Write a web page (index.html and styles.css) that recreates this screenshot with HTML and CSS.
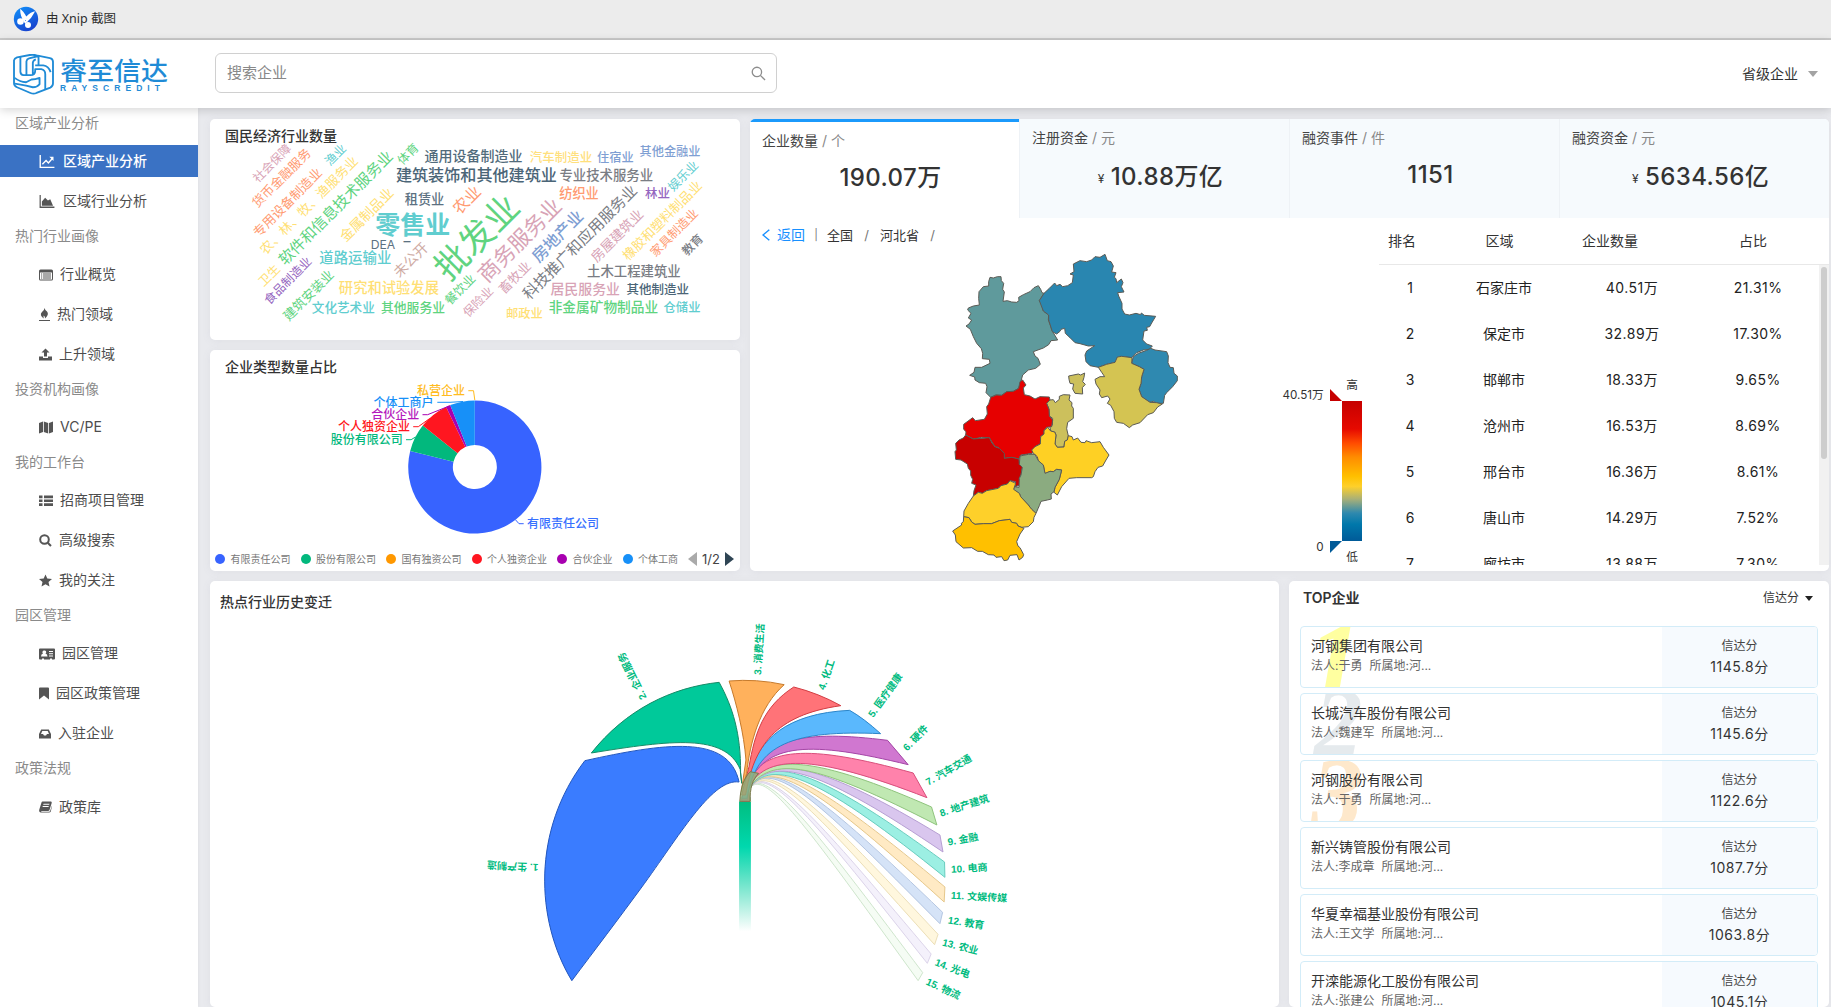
FILE: index.html
```html
<!DOCTYPE html>
<html lang="zh-CN">
<head>
<meta charset="utf-8">
<title>区域产业分析</title>
<link rel="stylesheet" href="styles.css">
</head>
<body>
<div class="titlebar">
  <svg class="xnip" viewBox="0 0 26 26"><defs><linearGradient id="xg" x1="0" y1="0" x2="0.6" y2="1"><stop offset="0" stop-color="#1093fb"/><stop offset="1" stop-color="#1844cf"/></linearGradient></defs><circle cx="13" cy="13" r="12.2" fill="url(#xg)"/><path d="M8 4.500Q12 8 14 15L12 16Q8 10 8 4.500ZM20.500 6.500Q16 8 11 14.500L12.500 16.500Q18 12 20.500 6.500Z" fill="#fff" stroke="#fff" stroke-width="1.600"/><circle cx="7.500" cy="15.500" r="3.300" fill="#fff"/><circle cx="15" cy="19" r="3" fill="#fff"/></svg>
  <span>由 Xnip 截图</span>
</div>
<header class="header">
  <div class="brand">
    <svg class="brand-mark" viewBox="38 158 122 122"><g fill="none" stroke="#1f8bd6" stroke-width="5.500" stroke-linejoin="round"><path d="M41 177Q42 171 50 168L88 161Q98 159 108 162L148 170Q157 172 157 181V245Q157 254 149 258L108 274Q99 278 90 274L50 257Q41 253 41 245Z"/><path d="M60 167V211Q61 220 69 221H78M78 221V180Q79 173 86 171L114 164V190M97 221V184Q98 176 106 174M78 221H90Q104 221 104 208V203H122Q134 205 134 218V264M104 192H128Q144 194 150 212M43 229Q58 241 77 242L93 234Q104 234 117 229V248Q110 257 97 257L77 252L44 246"/></g></svg>
    <div class="brand-text"><b>睿至信达</b><i>RAYSCREDIT</i></div>
  </div>
  <div class="search"><span>搜索企业</span><svg viewBox="0 0 16 16"><g fill="none" stroke="#8d8d8d" stroke-width="1.400"><circle cx="6.300" cy="6.300" r="5"/><path d="M10 10L15 15"/></g></svg></div>
  <div class="user"><span>省级企业</span><i class="caret"></i></div>
</header>
<div class="main">
  <nav class="side">
    <h4>区域产业分析</h4>
    <a class="on"><svg width="16" viewBox="0 0 16 14"><path d="M.7 0V13.300H16M3 10L7 6L9.500 8.500L14 3.500" fill="none" stroke="currentColor" stroke-width="1.500"/><path d="M10.500 2H15V6.500Z"/></svg>区域产业分析</a>
    <a><svg width="16" viewBox="0 0 16 14"><path d="M0 0H1.300V12.500H16V14H0ZM2.500 11.500V7L6 3L9 6L11.500 4.500L14.500 11.500Z"/></svg>区域行业分析</a>
    <h4>热门行业画像</h4>
    <a><svg width="14" viewBox="0 0 14 12"><path d="M1.500 1H12.500Q14 1 14 2.500V10.500Q14 12 12.500 12H1.500Q0 12 0 10.500V2.500Q0 1 1.500 1ZM1 4V11H13V4ZM2 5H3.200V6H2ZM4 5H12V6H4ZM2 7H3.200V8H2ZM4 7H12V8H4ZM2 9H3.200V10H2ZM4 9H12V10H4Z" fill-rule="evenodd"/></svg>行业概览</a>
    <a><svg width="11" viewBox="0 0 11 13"><path d="M0 12H11V13H0ZM5.500 0Q6 2 8 3.500Q10.500 6.500 6 10.500Q6.500 8.500 4.500 7.500L4.700 10.500Q0 7 3 4Q5.500 2 5.500 0Z"/></svg>热门领域</a>
    <a><svg width="13" viewBox="0 0 13 12"><path d="M6.500 0L10.500 4H8V8H5V4H2.500ZM0 8H4V9.500H9V8H13V12H0Z"/></svg>上升领域</a>
    <h4>投资机构画像</h4>
    <a><svg width="14" viewBox="0 0 14 12"><path d="M0 1.500L4 0V10.500L0 12ZM4.800 0L9.200 1.500V12L4.800 10.500ZM10 1.500L14 0V10.500L10 12Z"/></svg>VC/PE</a>
    <h4>我的工作台</h4>
    <a><svg width="14" viewBox="0 0 14 12"><path d="M0 1H3.500V3.800H0ZM5 1H14V3.800H5ZM0 5H3.500V7.500H0ZM5 5H14V7.500H5ZM0 8.800H3.500V11.500H0ZM5 8.800H14V11.500H5Z"/></svg>招商项目管理</a>
    <a><svg width="13" viewBox="0 0 13 13"><g fill="none" stroke="currentColor" stroke-width="2"><circle cx="5.500" cy="5.500" r="4.300"/><path d="M8.700 8.700L12 12"/></g></svg>高级搜索</a>
    <a><svg width="13" viewBox="0 0 13 12"><path d="M6.500 0L8.300 4L13 4.500L9.500 7.500L10.500 12L6.500 9.800L2.500 12L3.500 7.500L0 4.500L4.700 4Z"/></svg>我的关注</a>
    <h4>园区管理</h4>
    <a><svg width="16" viewBox="0 0 16 12"><path d="M1 1H15Q16 1 16 2V11Q16 12 15 12H13V11H11V12H5V11H3V12H1Q0 12 0 11V2Q0 1 1 1ZM5 3A1.700 1.700 0 0 0 4 6Q2 6.500 2 9H8.500Q8.500 6.500 6.500 6A1.700 1.700 0 0 0 5 3ZM10 3.500V4.500H14V3.500ZM10 5.700V6.700H14V5.700ZM10 8V9H14V8Z" fill-rule="evenodd"/></svg>园区管理</a>
    <a><svg width="10" viewBox="0 0 10 12"><path d="M0 1Q0 0 1 0H9Q10 0 10 1V12L5 8L0 12Z"/></svg>园区政策管理</a>
    <a><svg width="12" viewBox="0 0 12 12"><path d="M0 6.500L2.200 2H9.800L12 6.500V11H0ZM3.300 3.500L2 6.500H4L5 8H7L8 6.500H10L8.700 3.500Z" fill-rule="evenodd"/></svg>入驻企业</a>
    <h4>政策法规</h4>
    <a><svg width="13" viewBox="0 0 13 12"><path d="M3.500 1H12Q13 1 12.700 2.500L10.500 9.500Q10.200 10.500 9 10.500H2Q2 11.200 3 11.200H10Q11 11.200 11.300 10L12.900 5V6L11.800 11Q11.400 12 10 12H2Q-.5 11.500 .3 9L2.500 2Q2.800 1 3.500 1ZM4.500 3.300L4.200 4.200H10.200L10.500 3.300ZM3.800 5.600L3.500 6.500H9.500L9.800 5.600Z" fill-rule="evenodd"/></svg>政策库</a>
  </nav>
  <div class="content">
    <div class="row top">
      <div class="stack">
        <section class="card small">
          <h3>国民经济行业数量</h3>
          <svg class="cloud" viewBox="0 28 530 193" width="530" height="193">
            <g class="w">
            <text x="263.400" y="36" font-size="14" fill="#516b7b">通用设备制造业</text>
            <text x="350.900" y="38.300" font-size="12.500" fill="#ffe07d">汽车制造业</text>
            <text x="405.300" y="38.300" font-size="12.200" fill="#7f9fd3">住宿业</text>
            <text x="460" y="32.700" font-size="12.200" fill="#7f9fd3">其他金融业</text>
            <text x="266.400" y="56.300" font-size="16.100" fill="#4b6577" class="m">建筑装饰和其他建筑业</text>
            <text x="396.300" y="56.300" font-size="13.400" fill="#7a7d84">专业技术服务业</text>
            <text x="214.500" y="79.700" font-size="13.200" fill="#5c7182">租赁业</text>
            <text x="369" y="74.300" font-size="13.200" fill="#ff9b72">纺织业</text>
            <text x="447.600" y="74.300" font-size="12.500" fill="#9566c0">林业</text>
            <text x="202.800" y="105.700" font-size="25" fill="#60cdcf" class="b">零售业</text>
            <text x="172.900" y="125.300" font-size="12.200" fill="#5c7182" class="r">DEA</text>
            <text x="197" y="121.500" font-size="14" fill="#5c7182">–</text>
            <text x="145.300" y="138" font-size="14.400" fill="#60cdcf">道路运输业</text>
            <text x="178.900" y="168" font-size="14.300" fill="#ffdf75">研究和试验发展</text>
            <text x="133.300" y="188.300" font-size="12.600" fill="#60cdcf">文化艺术业</text>
            <text x="203" y="188.300" font-size="12.800" fill="#60d47f">其他服务业</text>
            <text x="423.900" y="152.300" font-size="13.400" fill="#7a7d84">土木工程建筑业</text>
            <text x="375.200" y="170.300" font-size="13.900" fill="#d8a3b6">居民服务业</text>
            <text x="447.800" y="170.300" font-size="12.500" fill="#4b6577">其他制造业</text>
            <text x="314.400" y="194.300" font-size="12.300" fill="#ffdf75">邮政业</text>
            <text x="393.400" y="188.300" font-size="13.700" fill="#60d47f">非金属矿物制品业</text>
            <text x="472" y="188.300" font-size="12.300" fill="#60cdcf">仓储业</text>
            <g fill="#d8a3b6">
            <text transform="translate(61.800,44) rotate(-45)" font-size="12">社会保障</text>
            <text transform="translate(309.500,121) rotate(-45)" font-size="21.600">商务服务业</text>
            <text transform="translate(407,116.500) rotate(-45)" font-size="13.500">房屋建筑业</text>
            <text transform="translate(304.600,158.200) rotate(-45)" font-size="13">畜牧业</text>
            <text transform="translate(267.900,182.700) rotate(-45)" font-size="12.200">保险业</text></g>
            <g fill="#ff9b72">
            <text transform="translate(71.500,59) rotate(-45)" font-size="12.800">货币金融服务</text>
            <text transform="translate(77.300,83.300) rotate(-45)" font-size="13">专用设备制造业</text>
            <text transform="translate(256.500,80.700) rotate(-45)" font-size="16">农业</text>
            <text transform="translate(464,113.500) rotate(-45)" font-size="12.300">家具制造业</text></g>
            <g fill="#ffdf75">
            <text transform="translate(98.700,86) rotate(-45)" font-size="13.200">农、林、牧、渔服务业</text>
            <text transform="translate(156.700,95.700) rotate(-45)" font-size="13.800">金属制品业</text>
            <text transform="translate(452,101.300) rotate(-45)" font-size="13.200">橡胶和塑料制品业</text>
            <text transform="translate(59,156.300) rotate(-45)" font-size="12.200">卫生</text></g>
            <g fill="#60d47f">
            <text transform="translate(125.700,88.800) rotate(-45)" font-size="15.400">软件和信息技术服务业</text>
            <text transform="translate(197.800,34.800) rotate(-45)" font-size="12">体育</text>
            <text transform="translate(266.500,118) rotate(-45)" font-size="34.500">批发业</text>
            <text transform="translate(250,170.500) rotate(-45)" font-size="12.400">餐饮业</text>
            <text transform="translate(98.300,176) rotate(-45)" font-size="13">建筑安装业</text></g>
            <g fill="#60cdcf">
            <text transform="translate(125.300,35.500) rotate(-45)" font-size="12">渔业</text>
            <text transform="translate(473,56.800) rotate(-45)" font-size="12.200">娱乐业</text></g>
            <text transform="translate(347.300,117) rotate(-45)" font-size="16.200" fill="#7f9fd3">房地产业</text>
            <text transform="translate(200.400,140.500) rotate(-45)" font-size="14" fill="#cfaca4" class="r">未公开</text>
            <text transform="translate(369.800,123.200) rotate(-45)" font-size="15.400" fill="#7a7d84" class="r">科技推广和应用服务业</text>
            <text transform="translate(482.300,125.500) rotate(-45)" font-size="12" fill="#7a7d84">教育</text>
            <text transform="translate(77.700,161.500) rotate(-45)" font-size="12.200" fill="#9566c0" class="r">食品制造业</text>
            </g>
          </svg>
        </section>
        <section class="card small">
          <h3>企业类型数量占比</h3>
          <svg class="donut" viewBox="0 28 530 164" width="530" height="164">
            <path d="M264.800 50.400A66.600 66.600 0 1 1 200.200 100.900L243.500 111.700A22 22 0 1 0 264.800 95Z" fill="#3763ff"/>
            <path d="M200.200 100.900A66.600 66.600 0 0 1 212.800 75.400L247.600 103.300A22 22 0 0 0 243.500 111.700Z" fill="#02b87d"/>
            <path d="M212.800 75.400A66.600 66.600 0 0 1 236.100 56.900L255.300 97.100A22 22 0 0 0 247.600 103.300Z" fill="#ff1620"/>
            <path d="M236.100 56.900A66.600 66.600 0 0 1 240.200 55.100L256.700 96.600L255.300 97.100Z" fill="#a800b0"/>
            <path d="M240.200 55.100A66.600 66.600 0 0 1 264.800 50.400V95A22 22 0 0 0 256.700 96.600Z" fill="#1790f8"/>
            <g fill="none" stroke-width="1">
              <path d="M258.300 40.700H263.500L264.800 50" stroke="#ffbc1f"/><path d="M227.300 52.300H240L253 51.500" stroke="#1790f8"/><path d="M212.500 64.700H217.600L238 56.500" stroke="#a800b0"/><path d="M203.200 76.700H208.300L219.700 68.500" stroke="#ff1620"/><path d="M196 89.700H201.100L205.500 87" stroke="#02b87d"/><path d="M313.700 173.700H309L305.400 169.700" stroke="#3763ff"/>
            </g>
            <g font-size="12" text-anchor="end" class="dl">
              <text x="255" y="45.200" fill="#ffbc1f">私营企业</text><text x="223.500" y="56.800" fill="#1790f8">个体工商户</text><text x="209.300" y="69.200" fill="#b51abd">合伙企业</text><text x="200" y="81.200" fill="#ff1620">个人独资企业</text><text x="192.800" y="94.200" fill="#02b87d">股份有限公司</text><text x="389" y="178.200" fill="#3770ff">有限责任公司</text>
            </g>
          </svg>
          <div class="legend">
            <span class="c1">有限责任公司</span><span class="c2">股份有限公司</span><span class="c3">国有独资公司</span><span class="c4">个人独资企业</span><span class="c5">合伙企业</span><span class="c6">个体工商</span>
            <i class="prev"></i><b>1/2</b><i class="next"></i>
          </div>
        </section>
      </div>
      <section class="card region">
        <div class="tabs">
          <div class="tab act"><p>企业数量 <em>/ 个</em></p><strong>190.07万</strong></div>
          <div class="tab"><p>注册资金 <em>/ 元</em></p><strong><small>¥</small>10.88万亿</strong></div>
          <div class="tab"><p>融资事件 <em>/ 件</em></p><strong>1151</strong></div>
          <div class="tab"><p>融资资金 <em>/ 元</em></p><strong><small>¥</small>5634.56亿</strong></div>
        </div>
        <div class="split">
          <div class="mapside">
            <div class="crumb"><svg width="8" height="12" viewBox="0 0 8 12"><path d="M7.300 .7L1 6L7.300 11.300" fill="none" stroke="#1890ff" stroke-width="1.400"/></svg><span class="back">返回</span><span class="bar">|</span><span>全国</span><span class="sl">/</span><span>河北省</span><span class="sl">/</span></div>
            <svg class="map" viewBox="0 30 1377 960" width="459" height="320">
              <defs><linearGradient id="heat" x1="0" y1="0" x2="0" y2="1"><stop offset="0" stop-color="#c60000"/><stop offset=".2" stop-color="#e60a00"/><stop offset=".3" stop-color="#ff4b00"/><stop offset=".4" stop-color="#ff8c00"/><stop offset=".54" stop-color="#ffc000"/><stop offset=".61" stop-color="#fed02a"/><stop offset=".7" stop-color="#a9b077"/><stop offset=".8" stop-color="#2f89ae"/><stop offset=".88" stop-color="#0078ab"/><stop offset="1" stop-color="#005a98"/></linearGradient></defs>
              <g stroke="#5b5b55" stroke-width="3" stroke-linejoin="round">
              <path fill="#5f9a9c" d="M206 125L210 112 220 114 232 110 243 110 244 122 251 130 248 148 253 156 249 184 262 182 275 186 290 187 297 182 296 172 310 164 330 155 342 143 355 137 362 148 366 158 372 160 358 182 365 192 370 213 386 225 385 240 392 258 396 272 404 285 413 300 393 302 386 314 370 324 340 335 345 348 354 355 361 373 347 385 325 390 308 405 303 423 296 445 280 454 260 455 245 466 226 465 212 472 198 458 201 440 197 430 178 428 165 420 164 411 149 406 162 397 165 382 185 382 210 370 208 358 187 356 188 340 184 326 170 310 160 290 151 268 138 258 147 252 155 240 145 234 153 220 143 210 145 204 160 198 178 195 176 175 177 155 190 140 206 138Z"/>
              <path fill="#2986b0" d="M358 182L372 160 388 145 404 129 410 137 420 133 428 140 443 137 457 128 460 105 450 102 462 95 460 72 480 62 500 65 515 60 525 50 540 52 555 43 562 62 573 65 580 78 575 96 588 98 583 112 588 116 590 128 604 117 609 128 604 140 612 156 593 158 596 168 606 190 606 207 614 222 628 225 648 220 662 224 664 219 673 226 707 229 695 249 689 260 680 262 682 271 672 273 668 300 680 312 697 318 688 328 670 330 650 338 635 353 600 349 585 367 560 373 535 382 510 377 498 365 495 345 500 333 524 317 505 318 480 311 465 308 450 293 436 280 434 265 423 268 420 274 410 282 397 275 386 240 386 225 370 213Z"/>
              <path fill="#2f89b0" d="M635 370L640 350 655 340 680 331 692 325 705 330 740 335 745 348 744 368 750 382 760 383 762 400 772 408 772 422 758 440 740 458 734 466 730 490 712 490 700 484 690 487 675 478 665 470 657 448 663 430 665 410 672 388 658 380Z"/>
              <path fill="#d4c452" d="M535 382L560 373 585 367 592 351 605 349 636 353 635 370 658 380 672 388 665 410 663 430 657 448 665 470 690 487 710 488 727 492 713 501 700 518 683 524 660 548 638 555 628 563 610 550 590 547 583 535 582 515 572 496 562 490 570 477 563 468 545 473 538 462 540 450 528 432 525 418 540 410 554 410 545 397Z"/>
              <path fill="#ccc05c" d="M446 408L475 402 482 405 494 399 492 412 488 425 496 433 487 443 488 462 465 460 458 447 461 432 450 430 447 418Z"/>
              <path fill="#ccc05c" d="M380 490L390 480 400 479 406 488 418 478 418 469 430 464 450 465 447 480 456 488 455 498 460 505 460 535 443 547 440 566 445 588 442 600 434 604 432 621 412 622 405 612 408 585 404 576 392 573 390 562 397 555 398 535 388 528 387 508Z"/>
              <path fill="#e60000" d="M212 472L230 465 245 466 260 455 280 454 296 445 300 425 308 420 318 435 310 444 313 464 330 468 345 477 360 470 388 471 390 480 380 490 387 508 388 528 398 540 395 560 380 562 372 572 373 582 362 590 361 612 345 620 337 640 302 645 297 657 275 652 253 655 250 637 238 630 235 622 225 620 208 593 185 592 160 597 137 585 138 575 131 568 131 553 158 533 166 542 193 538 202 522 200 500 206 492Z"/>
              <path fill="#c80000" d="M137 585L160 597 208 593 216 609 225 620 238 625 253 640 253 655 275 652 297 657 298 673 307 682 303 705 298 715 300 735 285 740 287 725 270 722 262 732 243 737 235 745 200 752 187 760 175 757 160 768 162 752 168 735 155 730 158 718 152 706 152 693 145 685 142 672 123 660 107 658 105 635 109 630 107 610 117 600 130 594Z"/>
              <path fill="#fed024" d="M335 630L345 620 361 612 362 590 372 582 372 572 383 562 392 573 404 576 408 585 405 612 412 622 432 621 434 604 442 600 445 587 456 590 460 600 473 594 483 607 495 608 498 602 515 608 540 605 550 622 567 645 558 660 548 678 534 682 525 695 520 710 515 713 470 713 447 715 425 740 412 765 402 757 405 742 418 718 425 690 410 688 400 695 390 694 375 702 370 675 355 664 352 650 340 640Z"/>
              <path fill="#8bab80" d="M300 648L325 643 345 643 355 662 370 675 375 700 390 694 400 695 410 688 425 690 418 718 405 742 402 755 393 762 394 777 382 780 363 784 358 797 354 806 348 820 335 808 325 795 302 770 298 760 280 750 283 740 297 742 298 715 303 705 307 682 298 673Z"/>
              <path fill="#fed02a" d="M160 768L175 757 187 760 200 752 235 745 243 737 262 732 270 722 287 730 281 748 298 760 302 770 325 795 335 808 348 820 342 832 340 845 325 860 305 862 294 858 290 850 275 847 270 838 255 840 238 842 215 851 190 851 165 853 155 846 147 833 131 830 132 813 145 790Z"/>
              <path fill="#ffc000" d="M131 830L147 833 155 846 165 853 190 851 215 851 238 842 255 840 270 838 275 847 290 850 294 858 312 865 300 882 290 905 294 918 300 923 311 944 308 952 297 960 291 944 270 946 263 960 252 962 245 950 228 952 222 945 205 944 187 934 173 934 155 923 130 924 108 905 106 885 98 873 125 855 124 850 130 845Z"/>
              </g>
              <rect x="1266" y="483" width="60" height="420" fill="url(#heat)"/>
              <path d="M1230 447L1266 483H1230Z" fill="#c60000"/><path d="M1230 903H1266L1230 939Z" fill="#005a98"/>
              <g font-size="35" fill="#333"><text x="1296" y="447" text-anchor="middle">高</text><text x="1296" y="962" text-anchor="middle">低</text><text x="1211" y="477" text-anchor="end">40.51万</text><text x="1211" y="933" text-anchor="end">0</text></g>
            </svg>
          </div>
          <div class="table">
            <div class="thead"><span>排名</span><span>区域</span><span>企业数量</span><span>占比</span></div>
            <div class="tscroll">
              <div class="tbody">
                <div class="tr"><span>1</span><span>石家庄市</span><span>40.51万</span><span>21.31%</span></div>
                <div class="tr"><span>2</span><span>保定市</span><span>32.89万</span><span>17.30%</span></div>
                <div class="tr"><span>3</span><span>邯郸市</span><span>18.33万</span><span>9.65%</span></div>
                <div class="tr"><span>4</span><span>沧州市</span><span>16.53万</span><span>8.69%</span></div>
                <div class="tr"><span>5</span><span>邢台市</span><span>16.36万</span><span>8.61%</span></div>
                <div class="tr"><span>6</span><span>唐山市</span><span>14.29万</span><span>7.52%</span></div>
                <div class="tr"><span>7</span><span>廊坊市</span><span>13.88万</span><span>7.30%</span></div>
              </div>
              <div class="track"><i></i></div>
            </div>
          </div>
        </div>
      </section>
    </div>
    <div class="row bottom">
      <section class="card hot">
        <h3>热点行业历史变迁</h3>
        <svg class="fan" viewBox="0 20 600 387" width="600" height="387">
          <defs><linearGradient id="stem" x1="0" y1="0" x2="0" y2="1"><stop offset="0" stop-color="#00be80"/><stop offset=".35" stop-color="#00d8ae"/><stop offset="1" stop-color="#00c896" stop-opacity="0"/></linearGradient></defs>
          <g transform="scale(.38265,.33333)" class="petals">
            <rect x="677" y="604" width="31" height="390" fill="url(#stem)" stroke="none"/>
            <path fill="#f5fcf4" stroke="#cfe6cd" d="M1157 1118C870 680 745 485 695 568L684 604H707L702 570C740 490 860 690 1145 1142Z"/>
            <path fill="#f4f1fb" stroke="#dcd4ea" d="M1179 1062C880 655 750 475 695 568L684 604H707L702 570C750 480 875 665 1169 1090Z"/>
            <path fill="#fff7de" stroke="#ecdfb8" d="M1197 1003C890 625 755 465 694 566L684 604H707L702 570C755 470 880 640 1188 1034Z"/>
            <path fill="#d5e3f7" stroke="#b4c6e2" d="M1209 937C895 590 760 460 694 566L684 604H707L702 570C760 460 890 610 1202 971Z"/>
            <path fill="#ffeac4" stroke="#e6c88c" d="M1215 861C905 565 760 455 693 565L684 604H707L702 570C760 460 900 580 1213 906Z"/>
            <path fill="#9cefe3" stroke="#68cdbf" d="M1214 786C910 530 760 450 693 565L684 604H707L702 570C760 460 905 545 1215 832Z"/>
            <path fill="#d9c6ee" stroke="#b79fd3" d="M1202 705C900 495 760 455 692 563L684 604H707L702 570C760 455 900 515 1210 756Z"/>
            <path fill="#c0e8b2" stroke="#8fc47d" d="M1180 621C880 470 750 455 692 562L684 604H707L700 570C760 460 880 490 1194 675Z"/>
            <path fill="#ff82ab" stroke="#d94f7c" d="M1132 519C850 430 740 440 690 560L684 604H704L700 570C740 460 870 460 1168 593Z"/>
            <path fill="#d077d0" stroke="#a345a5" d="M1065 421C850 390 730 410 690 560L684 600H700L696 570C740 420 870 425 1119 494Z"/>
            <path fill="#5ab8fd" stroke="#2c85c9" d="M966 331C800 340 730 420 705 520L684 595H698C720 430 820 390 1047 401Q1003 355 966 331Z"/>
            <path fill="#ff7378" stroke="#d23d43" d="M820 261C740 320 718 400 703 500L684 585H694C715 440 770 345 943 317Q885 280 820 261Z"/>
            <path fill="#ffb15c" stroke="#c67a2c" d="M651 243Q722 236 795 254C730 320 705 430 697 520L683 575L695 480C690 400 670 310 651 243Z"/>
            <path fill="#00c99a" stroke="#168a66" d="M291 459C380 330 500 262 625 247C660 320 682 400 681 518L684 550L680 508C640 400 500 420 291 459Z"/>
            <path fill="#3a7cff" stroke="#2357bd" d="M240 1142C144 960 136 690 274 482C480 430 650 400 677 546C610 535 530 690 430 850C360 960 300 1050 240 1142Z"/>
            <path fill="#8fae77" fill-opacity=".85" stroke="#7a7a4c" d="M679 604H706C705 565 712 540 728 520L706 515C690 535 681 560 679 604Z"/>
          </g>
          <g class="fl">
            <text transform="translate(58.200,267.500) rotate(183)">1. 生产制造</text>
            <text transform="translate(163.500,99) rotate(-116.400)">2. 企业服务</text>
            <text transform="translate(277.400,74.700) rotate(-86.500)">3. 消费生活</text>
            <text transform="translate(341.300,89.300) rotate(-71)">4. 化工</text>
            <text transform="translate(390.300,116) rotate(-54.400)">5. 医疗健康</text>
            <text transform="translate(424.800,149) rotate(-46)">6. 硬件</text>
            <text transform="translate(446.500,182.700) rotate(-30)">7. 汽车交通</text>
            <text transform="translate(460,213.300) rotate(-17.500)">8. 地产建筑</text>
            <text transform="translate(467.600,242) rotate(-9.800)">9. 金融</text>
            <text transform="translate(471,269.300) rotate(-3.200)">10. 电商</text>
            <text transform="translate(471,295.300) rotate(3)">11. 文娱传媒</text>
            <text transform="translate(468,320) rotate(8.500)">12. 教育</text>
            <text transform="translate(462.600,342) rotate(14.300)">13. 农业</text>
            <text transform="translate(455.400,361.700) rotate(21)">14. 光电</text>
            <text transform="translate(446.600,381) rotate(24.800)">15. 物流</text>
          </g>
        </svg>
      </section>
      <section class="card toplist">
        <div class="tl-head"><b>TOP企业</b><span>信达分<i></i></span></div>
        <div class="co"><u class="n1">1</u><div class="info"><p>河钢集团有限公司</p><small>法人:于勇<s></s>所属地:河...</small></div><div class="score"><small>信达分</small><p>1145.8分</p></div></div>
        <div class="co"><u class="n2">2</u><div class="info"><p>长城汽车股份有限公司</p><small>法人:魏建军<s></s>所属地:河...</small></div><div class="score"><small>信达分</small><p>1145.6分</p></div></div>
        <div class="co"><u class="n3">3</u><div class="info"><p>河钢股份有限公司</p><small>法人:于勇<s></s>所属地:河...</small></div><div class="score"><small>信达分</small><p>1122.6分</p></div></div>
        <div class="co"><div class="info"><p>新兴铸管股份有限公司</p><small>法人:李成章<s></s>所属地:河...</small></div><div class="score"><small>信达分</small><p>1087.7分</p></div></div>
        <div class="co"><div class="info"><p>华夏幸福基业股份有限公司</p><small>法人:王文学<s></s>所属地:河...</small></div><div class="score"><small>信达分</small><p>1063.8分</p></div></div>
        <div class="co"><div class="info"><p>开滦能源化工股份有限公司</p><small>法人:张建公<s></s>所属地:河...</small></div><div class="score"><small>信达分</small><p>1045.1分</p></div></div>
      </section>
    </div>
  </div>
</div>
</body>
</html>
```
FILE: styles.css
```css
* { box-sizing: border-box; margin: 0; padding: 0; }
html, body { height: 1007px; overflow: hidden; }
body { display: flex; flex-direction: column; width: 1831px; background: #e9eaee; color: #333; font: 14px/20px Inter, "Noto Sans CJK SC", sans-serif; }
i, em, u, s { font-style: normal; text-decoration: none; }

.titlebar { flex: none; height: 40px; border-bottom: 2px solid #cbcbcb; background: #ececec; display: flex; align-items: center; padding-left: 13px; gap: 7px; font: 12.5px/20px "Noto Sans", "Noto Sans CJK SC", sans-serif; color: #2c2c2c; }
.xnip { width: 26px; height: 26px; }

.header { flex: none; height: 68px; background: #fff; display: flex; align-items: center; padding: 0 13px; box-shadow: 0 2px 9px rgba(0,0,0,.17); position: relative; z-index: 2; }
.brand { display: flex; align-items: center; gap: 6px; width: 202px; }
.brand-mark { width: 41px; height: 41px; }
.brand-text { display: flex; flex-direction: column; color: #1f8bd6; }
.brand-text b { font: 500 27px/28px "Noto Sans CJK SC", sans-serif; transform: scaleY(.93); }
.brand-text i { font: bold 8.500px/9px "Liberation Sans", sans-serif; letter-spacing: 5.050px; }
.search { width: 562px; height: 40px; margin-bottom: 2px; border: 1px solid #d0d0d0; border-radius: 6px; display: flex; align-items: center; justify-content: space-between; padding: 0 10px 0 11px; color: #888; font-size: 15px; }
.search svg { width: 15px; height: 15px; }
.user { margin-left: auto; display: flex; align-items: center; gap: 10px; }
.caret { border: 5.500px solid transparent; border-top: 6px solid #a3a3a3; border-bottom: 0; }

.main { flex: 1; min-height: 0; display: flex; }
.side { flex: none; width: 198px; background: #fff; box-shadow: 1px 0 3px rgba(0,0,0,.04); }
.side h4 { font-weight: 400; font-size: 14px; line-height: 29px; height: 33.100px; padding-left: 15px; color: #8a8a8a; }
.side a { display: flex; align-items: center; gap: 7px; height: 32px; margin: 4px 0 8px; padding-left: 39px; color: #4d4d4d; font-size: 14px; }
.side a + a { margin-top: 8px; }
.side a:not(:last-child):has(+ h4) { margin-bottom: 4px; }
.side a svg { height: 13px; fill: currentColor; overflow: visible; color: #555; }
.side a.on, .side a.on svg { color: #fff; }
.side a.on { background: #3a72c4; font-weight: 500; }
.side a.on svg, .side a.on + a svg { margin-right: 1px; }

.content { flex: 1; padding: 11px 2px 0 12px; display: flex; flex-direction: column; gap: 10px; overflow: hidden; }
.row { display: flex; gap: 10px; }
.top { height: 452px; flex: none; }
.bottom { flex: 1; min-height: 0; }
.card { background: #fff; border-radius: 5px; box-shadow: 0 1px 8px rgba(120,125,145,.09); overflow: hidden; }
.stack { width: 530px; display: flex; flex-direction: column; gap: 10px; }
.small { height: 221px; display: flex; flex-direction: column; }
h3 { font-size: 14px; font-weight: 500; line-height: 20px; height: 28px; padding: 7px 0 0 15px; color: #333; flex: none; }
svg text { font-family: Inter, "Noto Sans CJK SC", sans-serif; }
.w text { text-anchor: middle; dominant-baseline: central; }
.w > text { font-weight: 500; }
.w > .b { font-weight: 700; }
.w > .r { font-weight: 400; }
.cloud, .donut { display: block; flex: none; overflow: visible; }
.dl text { font-weight: 500; }

.legend { display: flex; align-items: center; height: 29px; padding: 4px 0 0 5px; font-size: 10px; color: #777; white-space: nowrap; }
.legend span { display: flex; align-items: center; gap: 5.500px; margin-right: 10px; }
.legend span::before { content: ""; width: 10px; height: 10px; border-radius: 50%; background: var(--c); }
.legend b { font-weight: 400; font-size: 13px; color: #444; margin: 0 5px; }
.c1 { --c: #3763ff; } .c2 { --c: #02b87d; } .c3 { --c: #ff9800; } .c4 { --c: #ff1620; } .c5 { --c: #a800b0; } .c6 { --c: #1790f8; }
.prev, .next { border: 7.500px solid transparent; }
.prev { border-right: 9px solid #aaa; border-left: 0; }
.next { border-left: 9px solid #2f4554; border-right: 0; }

.region { width: 1079px; display: flex; flex-direction: column; }
.tabs { display: flex; height: 99px; flex: none; }
.tab { flex: 1; background: #f6fafd; border-left: 1px solid #eef2f6; padding: 9px 0 0 12px; }
.tab.act { background: #fff; border-left: 0; border-top: 3px solid #1b9afc; padding: 9px 0 0 12px; }
.tab p { line-height: 20px; color: #444; }
.tab em { color: #888; }
.tab strong { display: flex; justify-content: center; align-items: center; font-weight: 500; font-size: 24px; line-height: 32px; letter-spacing: .4px; margin-top: 11px; color: #333; }
.tab small { font-size: 12px; font-weight: 400; margin-right: 6px; padding-top: 4px; }
.split { display: flex; flex: 1; min-height: 0; }
.mapside { width: 629px; display: flex; flex-direction: column; }
.crumb { display: flex; align-items: center; height: 32px; padding: 2px 0 0 12px; font-size: 13px; color: #333; flex: none; }
.back { color: #1890ff; font-size: 14px; margin-left: 7px; }
.bar, .sl { color: #777; width: 27px; text-align: center; }
.bar { width: 22px; font-size: 11px; }
.map { display: block; margin-left: 170px; }

.table { width: 450px; display: flex; flex-direction: column; height: 347px; font-size: 14px; color: #222; }
.thead { display: grid; grid-template-columns: 46px 149px 72px 183px; height: 47px; line-height: 46px; border-bottom: 1px solid #e8e8e8; text-align: center; flex: none; color: #333; }
.thead span:last-child { padding-left: 31px; }
.tscroll { display: flex; flex: 1; min-height: 0; overflow: hidden; }
.tbody { width: 440px; }
.tr { display: grid; grid-template-columns: 62px 126px 130px 122px; line-height: 46px; height: 46px; text-align: center; }
.tr span:nth-child(n+3) { letter-spacing: .45px; }
.track { width: 10px; background: #f1f1f1; padding: 2px; }
.track i { display: block; width: 6px; height: 192px; border-radius: 3px; background: #cdcdcd; }

.hot { width: 1069px; }
.hot h3 { padding: 11px 0 0 10px; height: 39px; }
.fan { display: block; margin-left: 270px; }
.petals path { stroke-width: 1; vector-effect: non-scaling-stroke; }
.fl text { font: bold 10px "Liberation Sans", "Noto Sans CJK SC", sans-serif; fill: #00bb80; dominant-baseline: central; }

.toplist { width: 540px; padding: 0 11px; }
.tl-head { display: flex; justify-content: space-between; align-items: center; height: 45px; padding: 0 5px 11px 3px; }
.tl-head b { font-weight: 600; }
.tl-head span { font-size: 12px; display: flex; align-items: center; gap: 6px; }
.tl-head i { border: 4px solid transparent; border-top: 5px solid #222; border-bottom: 0; }
.co { position: relative; height: 62px; margin-bottom: 5px; border: 1px solid #d3ecf8; border-radius: 4px; display: flex; overflow: hidden; }
.info { flex: 1; padding: 9px 0 0 10px; position: relative; }
.co p { font-size: 14px; line-height: 20px; white-space: nowrap; }
.co small { display: block; font-size: 12px; line-height: 20px; color: #666; }
.co s { display: inline-block; width: 7px; }
.score { width: 155px; background: #f6fafe; text-align: center; padding-top: 9px; position: relative; }
.score small { color: #444; }
.score p { line-height: 22px; letter-spacing: .5px; }
.co u { position: absolute; left: 13px; top: -4px; font: italic bold 97px/68px "Liberation Serif", serif; }
.co .n1 { color: #ffffa0; font-size: 112px; left: 6px; top: 1px; }
.co .n2 { color: #e5eaed; top: -5px; }
.co .n3 { color: #fee8cb; font-size: 104px; left: 10px; top: -1px; }
```
